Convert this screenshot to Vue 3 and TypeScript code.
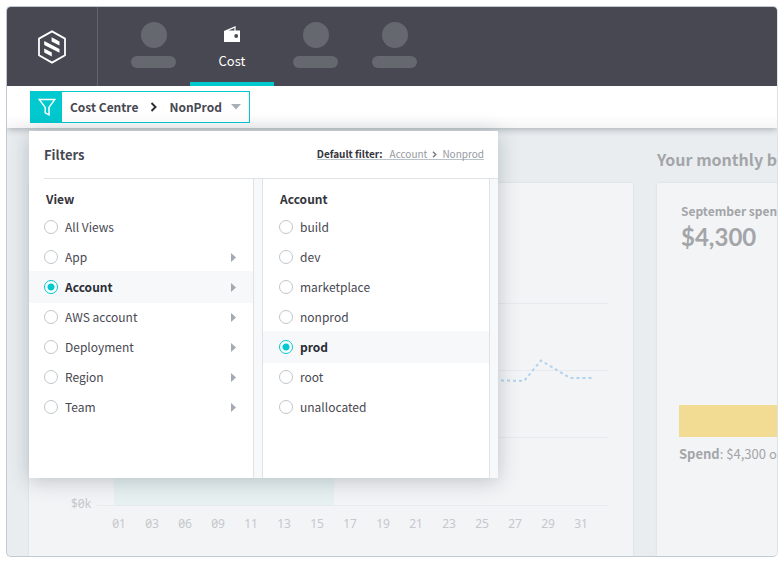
<script setup lang="ts">
import { ref } from 'vue'

interface Option {
  label: string
  nested?: boolean
}

const views: Option[] = [
  { label: 'All Views' },
  { label: 'App', nested: true },
  { label: 'Account', nested: true },
  { label: 'AWS account', nested: true },
  { label: 'Deployment', nested: true },
  { label: 'Region', nested: true },
  { label: 'Team', nested: true },
]
const accounts: Option[] = [
  { label: 'build' },
  { label: 'dev' },
  { label: 'marketplace' },
  { label: 'nonprod' },
  { label: 'prod' },
  { label: 'root' },
  { label: 'unallocated' },
]
const days = ['01', '03', '06', '09', '11', '13', '15', '17', '19', '21', '23', '25', '27', '29', '31']
const gridLines = [120, 187, 254, 322]

const view = ref('Account')
const account = ref('prod')
const open = ref(true)
</script>

<template>
  <div class="frame">
    <header class="topbar">
      <a class="brand" href="#" aria-label="Home">
        <svg width="30" height="36" viewBox="0 0 30 36">
          <path d="M15 2.4 28 9.6V26.2L15 33.6 2 26.2V9.6Z" fill="none" stroke="#fff" stroke-width="1.8" />
          <path d="M14.6 8.3 22.5 12.6V16.6L14.6 12.4ZM7.2 12 22.5 19.9V23.7L7.2 16ZM7.2 19.4 14.8 23.5V27.6L7.2 23.5Z" fill="#fff" />
        </svg>
      </a>
      <nav class="tabs">
        <a class="tab" href="#"><span class="dot"></span><span class="pill"></span></a>
        <a class="tab current" href="#">
          <svg width="17" height="17" viewBox="0 0 17 17">
            <path d="M0 5 11.6 0V4.6H16V16H0Z" fill="#fff" />
            <path d="M4.6 4.6 10.4 2V4.6Z" fill="#484852" />
            <circle cx="12.2" cy="10" r="1.9" fill="#484852" />
          </svg>
          <span>Cost</span>
        </a>
        <a class="tab" href="#"><span class="dot"></span><span class="pill"></span></a>
        <a class="tab" href="#"><span class="dot"></span><span class="pill"></span></a>
      </nav>
    </header>

    <div class="toolbar">
      <button class="filter" type="button" :aria-expanded="open" @click="open = !open">
        <span class="funnel">
          <svg width="18" height="18" viewBox="0 0 18 18" fill="none" stroke="#fff" stroke-width="1.5">
            <path d="M1.4 1.6H16.6L11 9.4V16.8L7.2 14.8V9.4Z" />
          </svg>
        </span>
        <span class="crumb">Cost Centre</span>
        <svg class="chevron" width="8" height="10" viewBox="0 0 8 10" fill="none" stroke="#2e2e36" stroke-width="2">
          <path d="M1.5 1 5.5 5 1.5 9" />
        </svg>
        <span class="crumb">NonProd</span>
        <svg class="caret" width="10" height="6" viewBox="0 0 10 6"><path d="M0 0H10L5 5.4Z" fill="#a9afb8" /></svg>
      </button>

      <section v-if="open" class="panel">
        <header class="panel-head">
          <h2>Filters</h2>
          <a href="#" class="default">
            <b>Default filter:</b>
            <span>Account</span>
            <svg width="5" height="7" viewBox="0 0 5 7" fill="none" stroke="#74767d" stroke-width="1.4">
              <path d="M1 .7 3.8 3.5 1 6.3" />
            </svg>
            <span>Nonprod</span>
          </a>
        </header>
        <div class="columns">
          <fieldset class="column">
            <legend>View</legend>
            <label v-for="o in views" :key="o.label" class="option" :class="{ picked: view === o.label }">
              <input v-model="view" type="radio" name="view" :value="o.label" />
              <span>{{ o.label }}</span>
              <svg v-if="o.nested" class="more" width="5" height="9" viewBox="0 0 5 9"><path d="M0 0 5 4.5 0 9Z" fill="#a3aab2" /></svg>
            </label>
          </fieldset>
          <fieldset class="column second">
            <legend>Account</legend>
            <label v-for="o in accounts" :key="o.label" class="option" :class="{ picked: account === o.label }">
              <input v-model="account" type="radio" name="account" :value="o.label" />
              <span>{{ o.label }}</span>
            </label>
          </fieldset>
        </div>
      </section>
    </div>

    <main class="content">
      <section class="card">
        <svg class="chart" viewBox="0 0 604 373">
          <rect x="85" y="150" width="220" height="172" fill="#e7f1f2" />
          <path v-for="y in gridLines" :key="y" :d="`M68 ${y}.5H580`" stroke="#e9eaed" />
          <path
            d="M400 196 469 197.3 495 198 512 177.5 541 195H563"
            fill="none" stroke="#b3d3ed" stroke-width="2" stroke-dasharray="3 3"
          />
          <text x="42" y="325">$0k</text>
          <text v-for="(d, i) in days" :key="d" :x="90 + i * 33" y="345" text-anchor="middle">{{ d }}</text>
        </svg>
      </section>
      <section class="budget">
        <h2>Your monthly b</h2>
        <div class="card summary">
          <h3>September spen</h3>
          <strong class="amount">$4,300</strong>
          <div class="bar"></div>
          <p><b>Spend</b>: $4,300 o</p>
        </div>
      </section>
    </main>
  </div>
</template>

<style>
body {
  background: #fff;
}
</style>

<style scoped>
.frame {
  margin: 6px;
  border: 1px solid #c2cad1;
  border-right-color: #dfe2e5;
  border-radius: 5px;
  overflow: hidden;
  background: #e9edf0;
  color: #484852;
  font-family: "Noto Sans CJK SC", "Noto Sans", sans-serif;
  font-size: 12px;
  line-height: 20px;
}
a {
  color: inherit;
  text-decoration: none;
}
h2,
h3,
p {
  margin: 0;
}
.topbar {
  position: relative;
  z-index: 2;
  display: flex;
  height: 79px;
  background: #484852;
}
.brand {
  display: flex;
  align-items: center;
  justify-content: center;
  width: 90px;
  border-right: 1px solid #63646d;
}
.tabs {
  display: flex;
  padding-left: 16px;
}
.tab {
  display: flex;
  flex-direction: column;
  align-items: center;
  gap: 8px;
  padding: 15px 17px 0;
}
.dot {
  width: 26px;
  height: 26px;
  border-radius: 50%;
  background: #666870;
}
.pill {
  width: 45px;
  height: 12px;
  border-radius: 6px;
  background: #666870;
}
.current {
  box-sizing: border-box;
  width: 84px;
  margin: 0 2px 0 -3px;
  padding-top: 19px;
  border-bottom: 4px solid #00c9cf;
  color: #fff;
  font-size: 13px;
}
.toolbar {
  position: relative;
  z-index: 1;
  padding: 5px 23px;
  background: linear-gradient(#fff 70%, #f6f6f7);
  box-shadow: 0 1px 7px rgba(50, 65, 75, 0.4);
}
.filter {
  display: flex;
  align-items: center;
  height: 32px;
  padding: 0 8px 0 0;
  border: 1px solid #00c9cf;
  background: #fff;
  color: #484852;
  font: 700 12px/20px "Noto Sans CJK SC", "Noto Sans", sans-serif;
}
.funnel {
  display: flex;
  align-items: center;
  justify-content: center;
  width: 31px;
  height: 30px;
  margin-right: 8px;
  background: #00c9cf;
}
.chevron {
  margin: 0 11px 0 12px;
}
.caret {
  margin-left: 9px;
}
.panel {
  position: absolute;
  top: 45px;
  left: 22px;
  display: flex;
  flex-direction: column;
  width: 469px;
  height: 347px;
  background: #fff;
  box-shadow: 0 3px 20px rgba(40, 55, 60, 0.26);
}
.panel-head {
  display: flex;
  align-items: center;
  justify-content: space-between;
  height: 47px;
  margin-left: 15px;
  padding-right: 14px;
  border-bottom: 1px solid #dfe3e6;
}
.panel-head h2 {
  font-size: 13px;
}
.default {
  display: flex;
  align-items: center;
  gap: 5px;
  border-bottom: 1px solid #b9c2c9;
  color: #96999f;
  font-size: 10px;
  line-height: 10px;
}
.default b {
  margin-right: 2px;
  color: #34343c;
}
.columns {
  display: flex;
  flex: 1;
  background: #f7f8fa;
}
.column {
  box-sizing: border-box;
  width: 225px;
  min-width: 0;
  margin: 0;
  padding: 0;
  border: 0;
  border-right: 1px solid #dfe3e6;
  background: #fff;
}
.second {
  width: 228px;
  margin-left: 8px;
  border-left: 1px solid #dfe3e6;
}
legend {
  float: left;
  width: 100%;
  box-sizing: border-box;
  margin-bottom: 2px;
  padding: 10px 17px 0;
  color: #34343c;
  font-weight: 700;
}
.option {
  display: flex;
  clear: both;
  align-items: center;
  height: 32px;
  margin-bottom: -2px;
  padding: 0 17px 0 15px;
}
.picked {
  background: #f6f8fa;
  color: #2c2c34;
  font-weight: 700;
}
.option input {
  appearance: none;
  box-sizing: border-box;
  width: 14px;
  height: 14px;
  margin: 0 7px 0 0;
  border: 1px solid #bfc7cd;
  border-radius: 50%;
  background: #fff;
}
.option input:checked {
  border-color: #00c9cf;
  background: radial-gradient(circle, #00c9cf 3px, #fff 4px);
}
.more {
  margin-left: auto;
}
.second .option {
  padding-left: 16px;
}
.content {
  display: grid;
  grid-template-columns: minmax(0, 1fr) 120px;
  gap: 24px;
  padding: 55px 0 0 22px;
}
.card {
  background: #f3f4f6;
  box-shadow: 0 0 2px rgba(60, 80, 90, 0.12);
}
.chart {
  display: block;
  width: 100%;
}
.chart text {
  fill: #c5c8cc;
  font-family: "Noto Sans", sans-serif;
  font-size: 12px;
  font-feature-settings: "zero";
}
.budget {
  display: flex;
  flex-direction: column;
  margin-top: -36px;
  color: #a3a5a9;
  white-space: nowrap;
}
.budget h2 {
  margin-bottom: 12px;
  font-size: 16px;
  line-height: 24px;
}
.summary {
  flex: 1;
  padding: 18px 0 0 24px;
}
.summary h3 {
  font-size: 12px;
  line-height: 20px;
}
.amount {
  display: block;
  font-family: Lato, sans-serif;
  font-size: 24px;
  line-height: 32px;
}
.bar {
  height: 32px;
  margin: 152px 0 7px -2px;
  background: #f2dc93;
}
.summary p {
  margin-left: -2px;
  font-size: 13px;
}
</style>
